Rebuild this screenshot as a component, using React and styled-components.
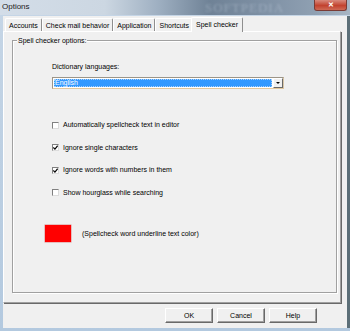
import React from 'react';
import styled, { createGlobalStyle } from 'styled-components';

const GlobalStyle = createGlobalStyle`
  html, body {
    margin: 0;
    padding: 0;
    background: #ffffff;
  }
  body {
    font-family: "Liberation Sans", Arial, sans-serif;
    font-size: 7px;
    color: #000;
  }
`;

const tabs = ['Accounts', 'Check mail behavior', 'Application', 'Shortcuts', 'Spell checker'];

const options = [
  { label: 'Automatically spellcheck text in editor', checked: false },
  { label: 'Ignore single characters', checked: true },
  { label: 'Ignore words with numbers in them', checked: true },
  { label: 'Show hourglass while searching', checked: false },
];

const CheckMark = () => (
  <svg width="5" height="5" viewBox="0 0 7 7">
    <path d="M0.5 3.5 L2.7 5.8 L6.5 1" fill="none" stroke="#000" strokeWidth="1.6" />
  </svg>
);

const App = () => {
  return (
    <>
      <GlobalStyle />
      <Window>
        <TitleBar>
          <Title>Options</Title>
          <Watermark>SOFTPEDIA</Watermark>
          <CloseButton>✕</CloseButton>
        </TitleBar>
        <Client>
          <TabStrip>
            {tabs.map((t) => (
              <Tab key={t} $active={t === 'Spell checker'}>
                {t}
              </Tab>
            ))}
          </TabStrip>
          <TabPanel>
            <GroupBox>
              <Legend>Spell checker options:</Legend>
              <Indented>
                <FieldLabel>Dictionary languages:</FieldLabel>
                <Combo>
                  <ComboValue>English</ComboValue>
                  <DropButton>
                    <Arrow />
                  </DropButton>
                </Combo>
                <CheckList>
                  {options.map((o) => (
                    <CheckRow key={o.label}>
                      <CheckBox>{o.checked && <CheckMark />}</CheckBox>
                      <span>{o.label}</span>
                    </CheckRow>
                  ))}
                </CheckList>
              </Indented>
              <ColorRow>
                <Swatch />
                <span>(Spellcheck word underline text color)</span>
              </ColorRow>
            </GroupBox>
          </TabPanel>
          <ButtonRow>
            <Button>OK</Button>
            <Button>Cancel</Button>
            <Button>Help</Button>
          </ButtonRow>
        </Client>
      </Window>
    </>
  );
};

const Window = styled.div`
  width: 350px;
  height: 331px;
  display: flex;
  flex-direction: column;
  overflow: hidden;
  background: linear-gradient(180deg, #c6d6e6 0%, #b3c9df 100%);
`;

const TitleBar = styled.div`
  height: 15px;
  flex: none;
  display: flex;
  align-items: flex-start;
  position: relative;
  background: linear-gradient(
    90deg,
    #d3dde8 0%,
    #ccd7e2 30%,
    #9fb0c2 45%,
    #6f8296 60%,
    #7e90a4 75%,
    #8fa0b2 90%,
    #a8b6c4 100%
  );
`;

const Title = styled.div`
  font-size: 8px;
  line-height: 13px;
  padding-left: 2px;
  color: #1b1b1b;
`;

const Watermark = styled.div`
  position: absolute;
  left: 205px;
  top: 0;
  font-family: "Liberation Serif", serif;
  font-size: 13px;
  line-height: 15px;
  letter-spacing: 1px;
  color: rgba(210, 222, 235, 0.35);
  filter: blur(1px);
`;

const CloseButton = styled.div`
  margin-left: auto;
  margin-right: 3px;
  width: 31px;
  height: 10px;
  border-radius: 0 0 3px 3px;
  background: linear-gradient(180deg, #d98a7d 0%, #c2432f 55%, #cf6a55 100%);
  border: 1px solid #7a3b35;
  border-top: none;
  color: #fff;
  font-size: 7px;
  font-weight: bold;
  line-height: 10px;
  text-align: center;
`;

const Client = styled.div`
  flex: 1;
  display: flex;
  flex-direction: column;
  background: #f0f0f0;
  margin: 1px 3px 3px 3px;
  box-shadow: 3px 0 0 #5c6f78;
`;

const TabStrip = styled.div`
  height: 15px;
  display: flex;
  align-items: flex-end;
  padding-left: 2px;
  position: relative;
  z-index: 1;
`;

const Tab = styled.div`
  height: ${({ $active }) => ($active ? '15px' : '13px')};
  line-height: 13px;
  padding: 0 ${({ $active }) => ($active ? '4px' : '3px')};
  margin: ${({ $active }) => ($active ? '0 0 -1px -2px' : '0')};
  box-sizing: border-box;
  background: #f0f0f0;
  border-top: 1px solid #ffffff;
  border-left: 1px solid #ffffff;
  border-right: 1px solid #8e8e8e;
  border-radius: 2px 2px 0 0;
  white-space: nowrap;
  color: #000;
`;

const TabPanel = styled.div`
  height: 272px;
  margin-right: 6px;
  box-sizing: border-box;
  display: flex;
  flex-direction: column;
  border-top: 1px solid #ffffff;
  border-left: 1px solid #ffffff;
  border-right: 1px solid #a0a0a0;
  border-bottom: 1px solid #a0a0a0;
  box-shadow: 1px 1px 0 #696969;
  padding: 8px 3px 9px 8px;
`;

const GroupBox = styled.div`
  flex: 1;
  position: relative;
  border: 1px solid #a0a0a0;
  box-shadow: inset 1px 1px 0 #ffffff, 1px 1px 0 #ffffff;
  padding: 21px 0 0 32px;
  display: flex;
  flex-direction: column;
`;

const Legend = styled.div`
  position: absolute;
  top: -5px;
  left: 4px;
  padding: 0 1px;
  line-height: 9px;
  background: #f0f0f0;
`;

const Indented = styled.div`
  padding-left: 7px;
  display: flex;
  flex-direction: column;
`;

const FieldLabel = styled.div`
  line-height: 9px;
`;

const Combo = styled.div`
  margin-top: 6px;
  width: 232px;
  height: 12px;
  box-sizing: border-box;
  display: flex;
  border: 1px solid #9c9588;
  border-bottom-color: #e2c79c;
  border-right-color: #d8c6a8;
  background: #ffffff;
`;

const ComboValue = styled.div`
  flex: 1;
  margin: 1px;
  padding-left: 1px;
  background: #3399ff;
  color: #ffffff;
  line-height: 8px;
  outline: 1px dotted #a8cff5;
  outline-offset: -1px;
`;

const DropButton = styled.div`
  width: 10px;
  box-sizing: border-box;
  background: #f0f0f0;
  border-top: 1px solid #ffffff;
  border-left: 1px solid #ffffff;
  border-right: 1px solid #696969;
  border-bottom: 1px solid #696969;
  display: flex;
  align-items: center;
  justify-content: center;
`;

const Arrow = styled.div`
  width: 0;
  height: 0;
  border-left: 2px solid transparent;
  border-right: 2px solid transparent;
  border-top: 2px solid #000;
`;

const CheckList = styled.div`
  margin-top: 32px;
  display: flex;
  flex-direction: column;
  gap: 14.5px;
`;

const CheckRow = styled.div`
  height: 8px;
  display: flex;
  align-items: center;
  gap: 4px;
  line-height: 8px;
`;

const CheckBox = styled.div`
  width: 7px;
  height: 7px;
  box-sizing: border-box;
  background: #ffffff;
  border-top: 1px solid #808080;
  border-left: 1px solid #808080;
  border-right: 1px solid #dcdcdc;
  border-bottom: 1px solid #dcdcdc;
  display: flex;
  align-items: center;
  justify-content: center;
`;

const ColorRow = styled.div`
  margin-top: 28px;
  display: flex;
  align-items: center;
  gap: 11px;
`;

const Swatch = styled.div`
  width: 26px;
  height: 17px;
  background: #ff0000;
  box-shadow: 0 0 0 0.5px #d88;
`;

const ButtonRow = styled.div`
  display: flex;
  justify-content: flex-end;
  gap: 4px;
  padding: 5px 30px 0 0;
`;

const Button = styled.div`
  width: 48px;
  height: 15px;
  box-sizing: border-box;
  background: #f0f0f0;
  border-top: 1px solid #ffffff;
  border-left: 1px solid #ffffff;
  border-right: 1px solid #696969;
  border-bottom: 1px solid #696969;
  box-shadow: inset -1px -1px 0 #a0a0a0;
  text-align: center;
  line-height: 13px;
`;

export default App;
